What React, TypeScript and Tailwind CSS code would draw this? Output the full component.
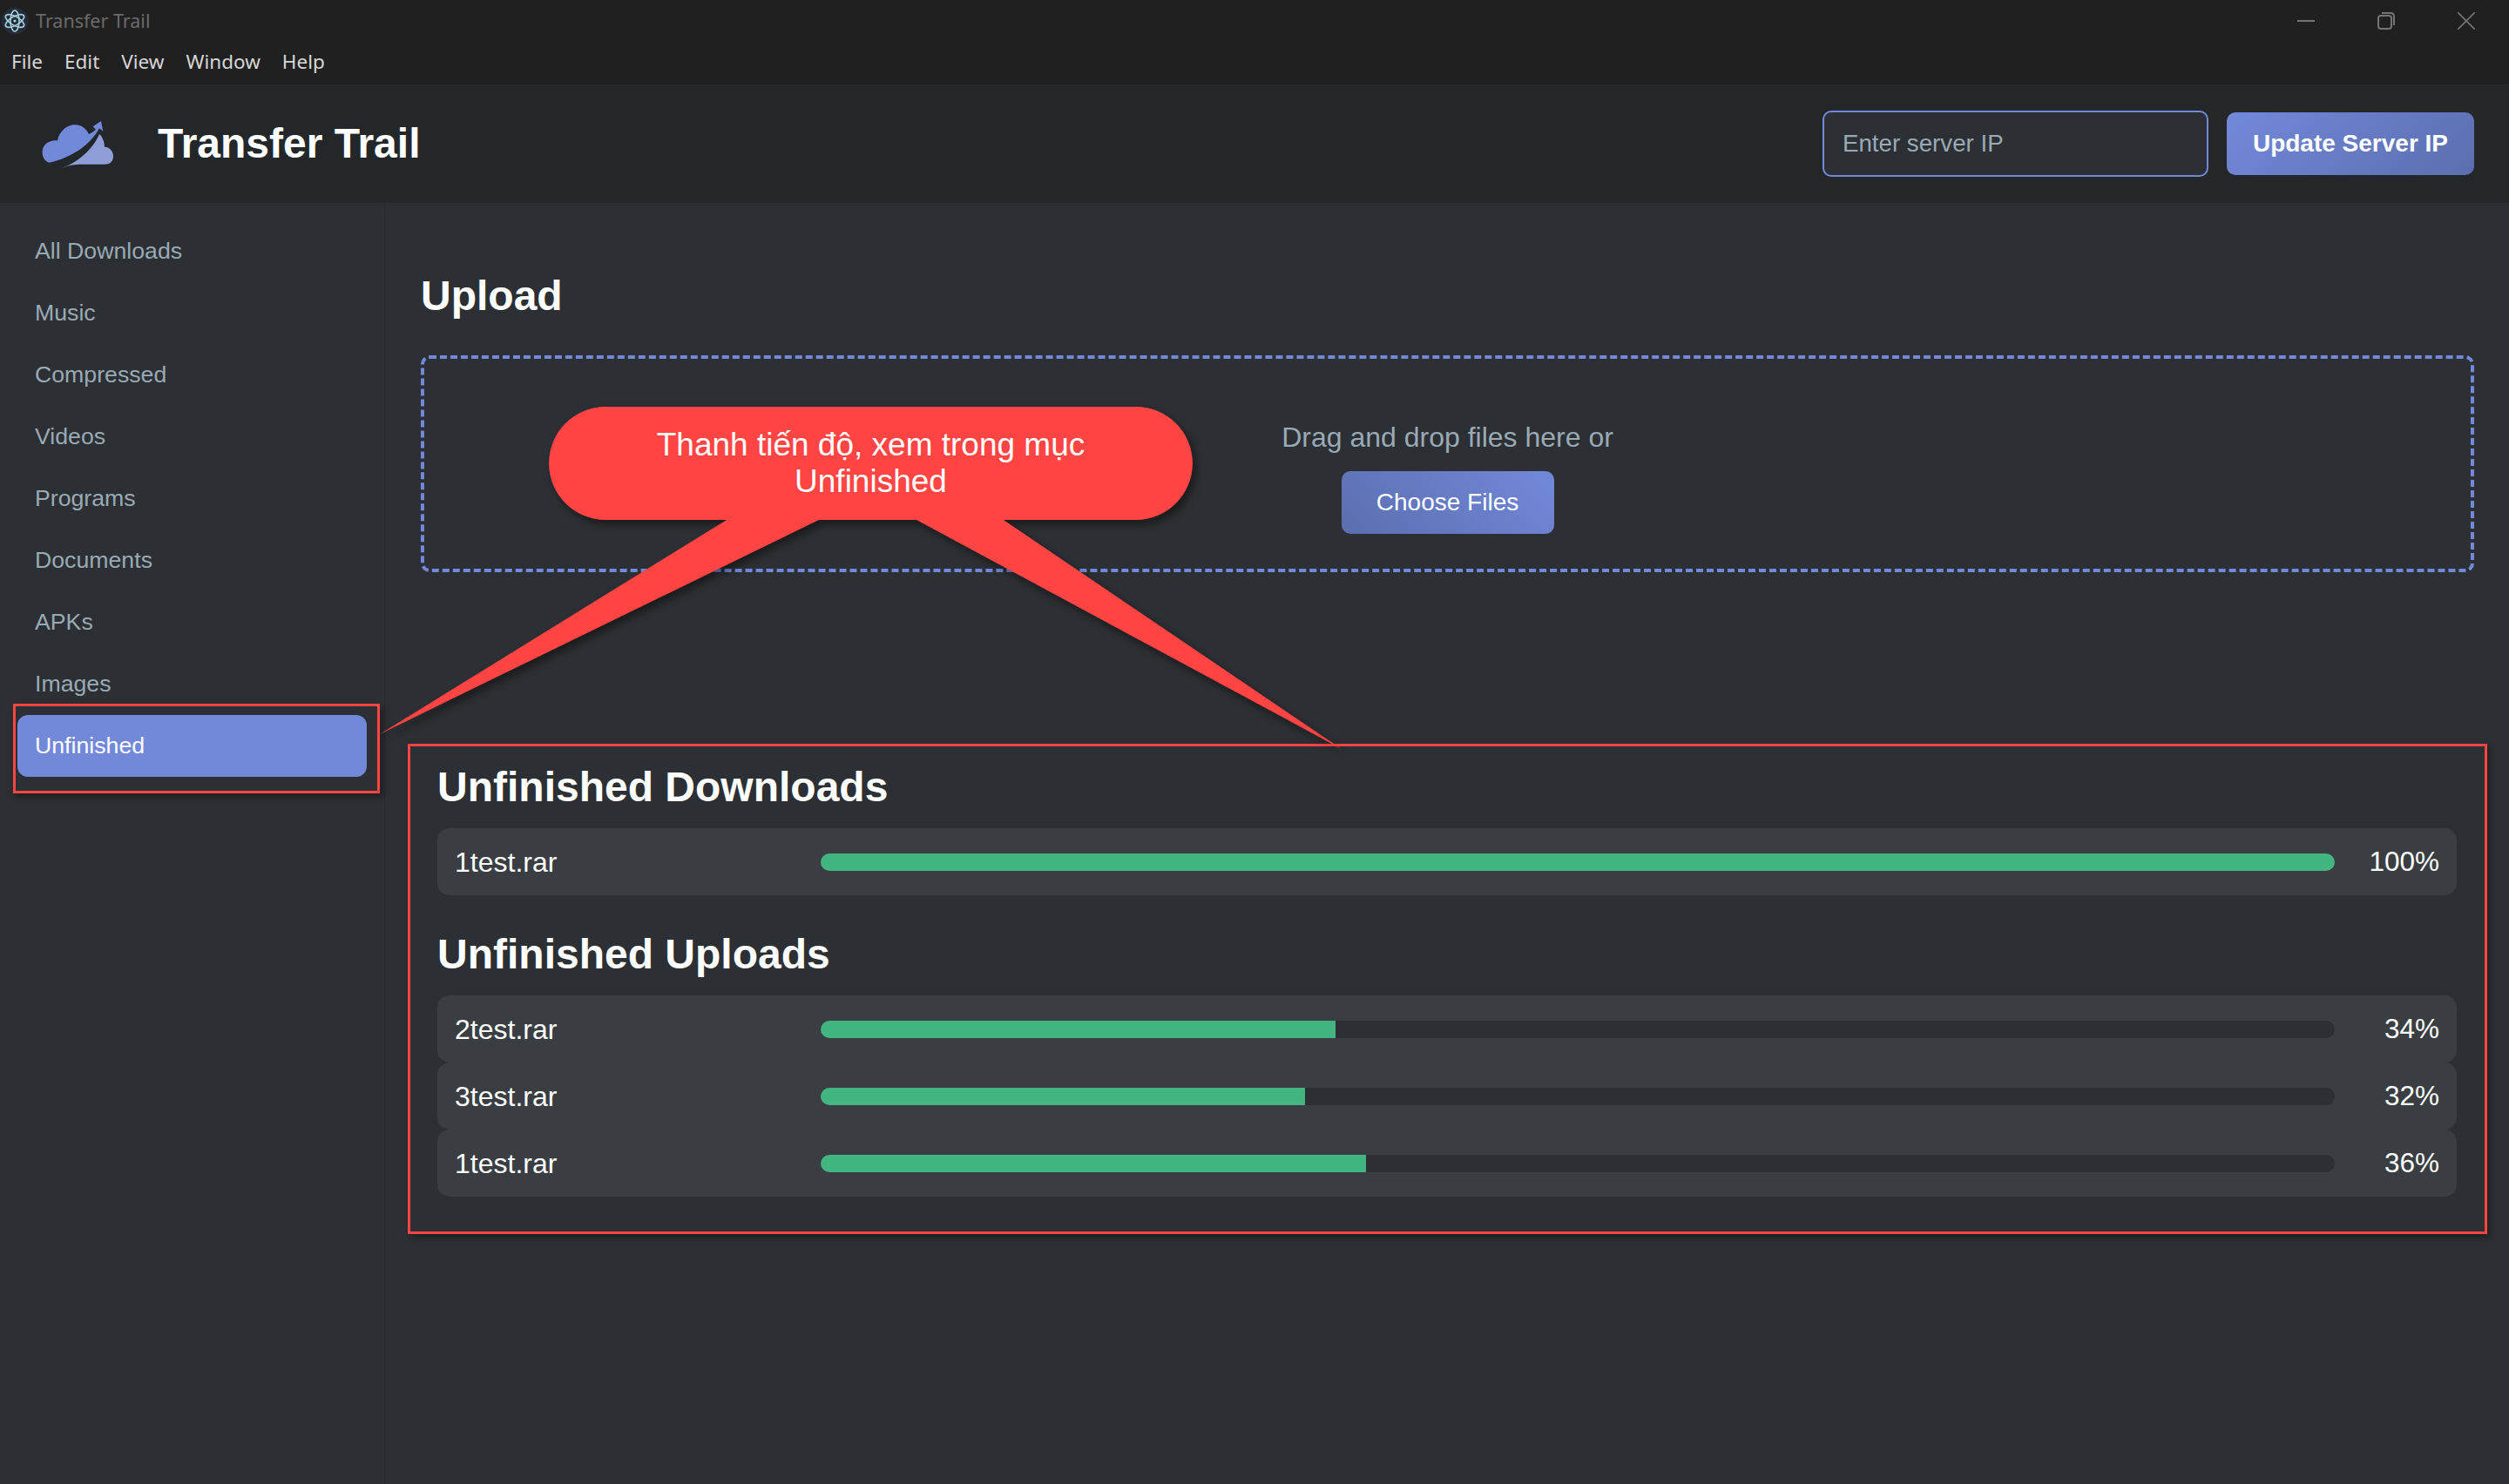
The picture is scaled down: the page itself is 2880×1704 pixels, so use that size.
import React from "react";

const nav = ["All Downloads", "Music", "Compressed", "Videos", "Programs", "Documents", "APKs", "Images", "Unfinished"];

function Row({ name, pct }: { name: string; pct: number }) {
  return (
    <div className="flex h-[77px] items-center rounded-[14px] bg-[#3a3e42] px-5 text-white">
      <span className="w-[420px] text-[32px]">{name}</span>
      <div className="h-5 flex-1 overflow-hidden rounded-[10px] bg-[#2c2f33]">
        <div className="h-full bg-[#43b581]" style={{ width: `${pct}%` }} />
      </div>
      <span className="w-[120px] text-right text-[31.5px]">{pct}%</span>
    </div>
  );
}

function ElectronIcon() {
  return (
    <svg width="32" height="32" viewBox="0 0 32 32" fill="none" stroke="#a5d4de" strokeWidth="1.6">
      <circle cx="16" cy="16" r="15.5" fill="#262b3a" stroke="none" />
      <ellipse cx="16" cy="16" rx="12" ry="5" transform="rotate(30 16 16)" />
      <ellipse cx="16" cy="16" rx="12" ry="5" transform="rotate(90 16 16)" />
      <ellipse cx="16" cy="16" rx="12" ry="5" transform="rotate(150 16 16)" />
      <circle cx="16" cy="16" r="1.6" fill="#a5d4de" stroke="none" />
    </svg>
  );
}

function Logo() {
  return (
    <svg width="100" height="75" viewBox="0 0 300 225" className="shrink-0">
      <path
        fill="#7289da"
        d="M50 176C32 172 24 152 26 135C29 112 52 96 78 100C85 65 115 44 140 46C160 46 178 60 186 78C195 74 203 68 210 62L200 52L228 33L235 68L222 58C195 110 130 160 50 176Z"
      />
      <path
        fill="#8f9ed6"
        d="M92 196C160 170 205 120 222 78C232 85 240 105 240 122C260 122 271 140 270 155C270 172 258 182 240 182L150 182Q120 183 92 196Z"
      />
    </svg>
  );
}

export default function App() {
  return (
    <div className="relative flex h-[1704px] w-[2880px] flex-col overflow-hidden bg-[#2c2f33] font-['Liberation_Sans',Arial,sans-serif]">
      {/* Window chrome */}
      <div className="flex h-[97px] shrink-0 flex-col bg-[#202020] font-['Noto_Sans',sans-serif]">
        <div className="flex h-[44px] items-center justify-between pl-[1px] pt-1">
          <div className="flex items-center gap-2 text-[21.5px] text-[#6b6b6b]">
            <ElectronIcon />
            <span>Transfer Trail</span>
          </div>
          <div className="mr-[39px] flex items-center gap-[72px]">
            <svg width="20" height="20" viewBox="0 0 20 20" stroke="#757575" strokeWidth="2" fill="none">
              <path d="M0 10H20" />
            </svg>
            <svg width="20" height="20" viewBox="0 0 20 20" stroke="#757575" strokeWidth="2" fill="none">
              <rect x="1" y="4" width="15" height="15" rx="3" />
              <path d="M5 1H15Q19 1 19 5V15" />
            </svg>
            <svg width="20" height="20" viewBox="0 0 20 20" stroke="#757575" strokeWidth="1.6" fill="none">
              <path d="M0 0L20 20M20 0L0 20" />
            </svg>
          </div>
        </div>
        <div className="flex flex-1 items-center gap-[25px] pl-[13px] text-[22.5px] text-[#d6d6d6]">
          <span>File</span>
          <span>Edit</span>
          <span>View</span>
          <span>Window</span>
          <span>Help</span>
        </div>
      </div>

      {/* App header */}
      <header className="flex h-[136px] shrink-0 items-center justify-between bg-[#23272a] pl-10 pr-10">
        <div className="flex items-center gap-[41px]">
          <Logo />
          <h1 className="text-[48px] font-bold text-white">Transfer Trail</h1>
        </div>
        <div className="flex items-center gap-[21px]">
          <div className="flex h-[76px] w-[443px] items-center rounded-[10px] border-2 border-[#7289da] bg-[#2c2f33] pl-[21px] text-[27.7px] text-[#99aab5]">
            Enter server IP
          </div>
          <button className="h-[72px] w-[284px] rounded-[10px] bg-[linear-gradient(135deg,#7289da,#5b6eae)] text-[28px] font-bold text-white">
            Update Server IP
          </button>
        </div>
      </header>

      <div className="flex min-h-0 flex-1">
        {/* Sidebar */}
        <aside className="w-[442px] shrink-0 border-r border-[#26292d] px-5 pt-5">
          {nav.map((n) => (
            <div
              key={n}
              className={
                n === "Unfinished"
                  ? "flex h-[71px] items-center rounded-[12px] bg-[#7289da] pl-5 text-[26.7px] text-white"
                  : "flex h-[71px] items-center rounded-[12px] pl-5 text-[26.7px] text-[#99aab5]"
              }
            >
              {n}
            </div>
          ))}
        </aside>

        {/* Main */}
        <main className="min-w-0 flex-1 pl-[41px] pr-10 pt-20">
          <h2 className="mb-[41px] text-[48px] font-bold leading-[54px] text-white">Upload</h2>
          <div className="flex h-[249px] flex-col items-center rounded-[10px] border-4 border-dashed border-[#7289da] pt-[72px]">
            <p className="text-[32px] leading-[37px] text-[#99aab5]">Drag and drop files here or</p>
            <button className="mt-5 h-[72px] w-[244px] rounded-[10px] bg-[linear-gradient(45deg,#5b6eae,#7289da)] text-[28px] text-white">
              Choose Files
            </button>
          </div>

          <section className="mt-[219px] pl-[19px] pr-5">
            <h2 className="mb-[19px] text-[48px] font-bold leading-[56px] text-white">Unfinished Downloads</h2>
            <Row name="1test.rar" pct={100} />
            <h2 className="mb-[19px] mt-10 text-[48px] font-bold leading-[56px] text-white">Unfinished Uploads</h2>
            <Row name="2test.rar" pct={34} />
            <Row name="3test.rar" pct={32} />
            <Row name="1test.rar" pct={36} />
          </section>
        </main>
      </div>

      {/* Annotation overlays */}
      <div className="absolute left-[15px] top-[808px] h-[103px] w-[421px] border-[3px] border-[#ff4444] shadow-[3px_4px_8px_rgba(0,0,0,0.35)]" />
      <div className="absolute left-[468px] top-[854px] h-[563px] w-[2387px] border-[3px] border-[#ff4444] shadow-[3px_4px_8px_rgba(0,0,0,0.35)]" />
      <svg className="absolute left-0 top-0 drop-shadow-[4px_5px_5px_rgba(0,0,0,0.45)]" width="2880" height="1704" viewBox="0 0 2880 1704">
        <path
          fill="#ff4444"
          d="M695 467H1304A65 65 0 0 1 1304 597H1152L1540 860L1052 597H940L436 843L834 597H695A65 65 0 0 1 695 467Z"
        />
      </svg>
      <div className="absolute left-[630px] top-[467px] flex h-[130px] w-[739px] items-center justify-center text-center text-[37px] leading-[42px] text-white">
        <span>
          Thanh tiến độ, xem trong mục
          <br />
          Unfinished
        </span>
      </div>
    </div>
  );
}
